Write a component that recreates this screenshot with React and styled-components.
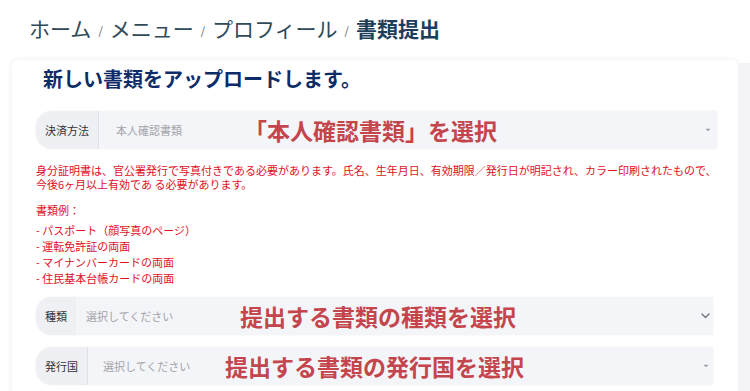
import React from "react";
import styled, { createGlobalStyle } from "styled-components";

const Global = createGlobalStyle`
  html, body { margin: 0; padding: 0; background: #ffffff; }
  body { font-family: "Noto Sans CJK JP", "Noto Sans", sans-serif; }
`;

const Layout = styled.div`
  display: flex;
  width: 750px;
  height: 391px;
  overflow: hidden;
`;

const Main = styled.div`
  width: 738px;
  flex-shrink: 0;
  padding-left: 12px;
  box-sizing: border-box;
`;

const Side = styled.div`
  flex: 1;
  margin-top: 63px;
  background: #f4f4f6;
`;

const Breadcrumb = styled.nav`
  display: flex;
  align-items: center;
  height: 30px;
  margin-top: 13px;
  padding-left: 17px;
  font-size: 21px;
  line-height: 30px;
  color: #2f4b58;
`;

const Crumb = styled.span`
  font-weight: ${(p) => (p.$current ? 700 : 400)};
  color: ${(p) => (p.$current ? "#1d3e5a" : "#2f4b58")};
`;

const Sep = styled.span`
  font-size: 11px;
  color: #55636b;
  margin: 4px 7px 0 7px;
`;

const Card = styled.section`
  margin-top: 17px;
  background: #ffffff;
  border-radius: 6px;
  box-shadow: 0 0 6px rgba(0, 0, 0, 0.08);
  padding: 5px 21px 20px 24px;
  min-height: 360px;
`;

const Title = styled.h2`
  margin: 0 0 0 7px;
  font-size: 20px;
  line-height: 28px;
  font-weight: 700;
  color: #0d2c68;
`;

const Row = styled.div`
  position: relative;
  display: flex;
  align-items: center;
  height: 38px;
  margin-top: ${(p) => p.$top}px;
  margin-right: ${(p) => p.$inset}px;
  background: #f4f5f9;
  border-radius: 16px 0 0 16px;
  box-shadow: 0 0 3px rgba(0, 0, 0, 0.05);
`;

const Label = styled.div`
  display: flex;
  align-items: center;
  height: 100%;
  padding: 0 9px;
  font-size: 11px;
  color: #333333;
  background: #eff0f3;
  border-radius: 16px 0 0 16px;
  border-right: ${(p) => (p.$divider ? "1px solid #dfe0e5" : "none")};
`;

const Placeholder = styled.div`
  flex: 1;
  padding-left: ${(p) => p.$pad}px;
  font-size: 11px;
  color: #a3a3a8;
`;

const Caret = styled.svg`
  margin-right: ${(p) => p.$right}px;
  flex-shrink: 0;
`;

const Annotation = styled.span`
  position: absolute;
  left: ${(p) => p.$left}px;
  top: 50%;
  transform: translateY(-50%);
  font-size: 23px;
  line-height: 30px;
  font-weight: 700;
  color: #c4454c;
  white-space: nowrap;
  pointer-events: none;
`;

const Notice = styled.p`
  margin: 14px 0 0 0;
  font-size: 11px;
  line-height: 14px;
  color: #e0101e;
`;

const NoticeLine = styled.span`
  display: block;
  height: 14px;
`;

const Examples = styled.p`
  margin: 11px 0 0 0;
  font-size: 11px;
  line-height: 16px;
  color: #e0101e;
`;

const List = styled.ul`
  list-style: none;
  margin: 4px 0 0 0;
  padding: 0;
  font-size: 11px;
  line-height: 16px;
  color: #e0101e;
`;

const SmallCaret = ({ right }) => (
  <Caret $right={right} width="6" height="4" viewBox="0 0 6 4">
    <path d="M0.5 0.8 L3 3.2 L5.5 0.8 Z" fill="#9a9aa2" />
  </Caret>
);

const Chevron = ({ right }) => (
  <Caret $right={right} width="9" height="6" viewBox="0 0 9 6">
    <path d="M1 1 L4.5 4.6 L8 1" fill="none" stroke="#77777f" strokeWidth="1.4" strokeLinecap="round" />
  </Caret>
);

export default function App() {
  return (
    <>
      <Global />
      <Layout>
        <Main>
          <Breadcrumb>
            <Crumb>ホーム</Crumb>
            <Sep>/</Sep>
            <Crumb>メニュー</Crumb>
            <Sep>/</Sep>
            <Crumb>プロフィール</Crumb>
            <Sep>/</Sep>
            <Crumb $current>書類提出</Crumb>
          </Breadcrumb>
          <Card>
            <Title>新しい書類をアップロードします。</Title>

            <Row $top={18} $inset={0}>
              <Label $divider>決済方法</Label>
              <Placeholder $pad={17}>本人確認書類</Placeholder>
              <SmallCaret right={6} />
              <Annotation $left={208}>「本人確認書類」を選択</Annotation>
            </Row>

            <Notice>
              <NoticeLine>
                身分証明書は、官公署発行で写真付きである必要があります。氏名、生年月日、有効期限／発行日が明記され、カラー印刷されたもので、
              </NoticeLine>
              <NoticeLine>今後6ヶ月以上有効であ る必要があります。</NoticeLine>
            </Notice>
            <Examples>書類例：</Examples>
            <List>
              <li>- パスポート（顔写真のページ）</li>
              <li>- 運転免許証の両面</li>
              <li>- マイナンバーカードの両面</li>
              <li>- 住民基本台帳カードの両面</li>
            </List>

            <Row $top={11} $inset={4}>
              <Label>種類</Label>
              <Placeholder $pad={10}>選択してください</Placeholder>
              <Chevron right={3} />
              <Annotation $left={204}>提出する書類の種類を選択</Annotation>
            </Row>

            <Row $top={12} $inset={4}>
              <Label $divider>発行国</Label>
              <Placeholder $pad={15}>選択してください</Placeholder>
              <SmallCaret right={4} />
              <Annotation $left={189}>提出する書類の発行国を選択</Annotation>
            </Row>
          </Card>
        </Main>
        <Side />
      </Layout>
    </>
  );
}
